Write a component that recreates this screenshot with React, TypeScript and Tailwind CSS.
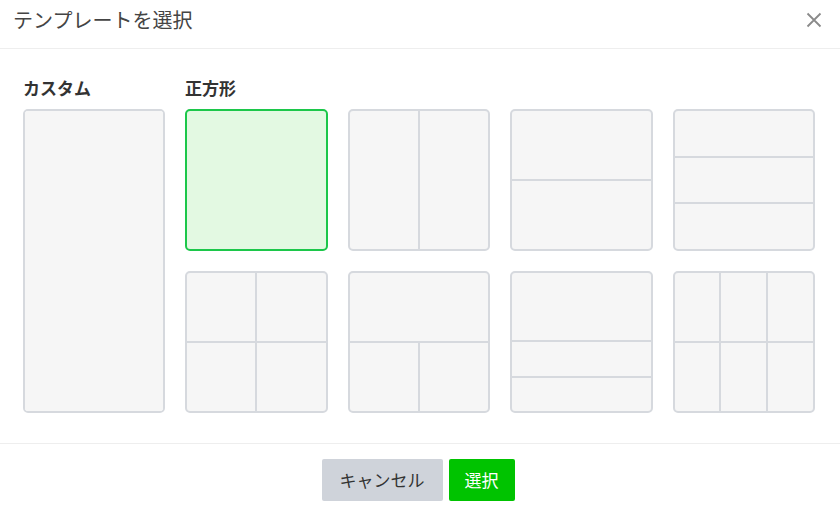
import React from 'react';

const font = { fontFamily: '"Noto Sans CJK JP", "Noto Sans", sans-serif' };

// Cell inside a template preview
const Cell: React.FC<{ className?: string }> = ({ className = '' }) => (
  <div className={`bg-[#f6f6f6] ${className}`} />
);

const Tile: React.FC<{ selected?: boolean; children?: React.ReactNode; className?: string }> = ({
  selected,
  children,
  className = ''
}) => (
  <div
    className={`overflow-hidden rounded-[5px] border-2 ${
      selected ? 'border-[#1cc74a] bg-[#e3f9e2]' : 'border-[#d6d9de] bg-[#d6d9de]'
    } ${className}`}
  >
    {children}
  </div>
);

const App: React.FC = () => {
  return (
    <div className="flex h-[511px] w-[840px] flex-col bg-white text-[#333]" style={font}>
      {/* Header */}
      <div className="flex h-[49px] shrink-0 items-center justify-between border-b border-[#eeeeee] pl-[13px] pr-[18px]">
        <h2 className="pb-[8px] text-[20px] leading-none text-[#444]">テンプレートを選択</h2>
        <button type="button" className="mb-[8px] text-[#8a8a8a]">
          <svg width="16" height="16" viewBox="0 0 16 16" fill="none" stroke="currentColor" strokeWidth="1.8">
            <path d="M1.5 1.5 L14.5 14.5 M14.5 1.5 L1.5 14.5" />
          </svg>
        </button>
      </div>

      {/* Body */}
      <div className="flex flex-1 gap-[20px] border-b border-[#eeeeee] pl-[23px] pt-[29px]">
        <div className="flex w-[142px] flex-col">
          <div className="mb-[11px] h-[20px] text-[17px] font-bold leading-[20px]">カスタム</div>
          <Tile className="h-[304px]">
            <Cell className="h-full" />
          </Tile>
        </div>

        <div className="flex w-[630px] flex-col">
          <div className="mb-[11px] h-[20px] text-[17px] font-bold leading-[20px]">正方形</div>
          <div className="grid grid-cols-4 gap-[20px]">
            <Tile selected className="h-[142px]" />

            <Tile className="h-[142px]">
              <div className="grid h-full grid-cols-2 gap-[2px]">
                <Cell />
                <Cell />
              </div>
            </Tile>

            <Tile className="h-[142px]">
              <div className="grid h-full grid-rows-2 gap-[2px]">
                <Cell />
                <Cell />
              </div>
            </Tile>

            <Tile className="h-[142px]">
              <div className="grid h-full grid-rows-3 gap-[2px]">
                <Cell />
                <Cell />
                <Cell />
              </div>
            </Tile>

            <Tile className="h-[142px]">
              <div className="grid h-full grid-cols-2 grid-rows-2 gap-[2px]">
                <Cell />
                <Cell />
                <Cell />
                <Cell />
              </div>
            </Tile>

            <Tile className="h-[142px]">
              <div className="grid h-full grid-rows-2 gap-[2px]">
                <Cell />
                <div className="grid grid-cols-2 gap-[2px]">
                  <Cell />
                  <Cell />
                </div>
              </div>
            </Tile>

            <Tile className="h-[142px]">
              <div className="grid h-full grid-rows-[2fr_1fr_1fr] gap-[2px]">
                <Cell />
                <Cell />
                <Cell />
              </div>
            </Tile>

            <Tile className="h-[142px]">
              <div className="grid h-full grid-cols-3 grid-rows-2 gap-[2px]">
                <Cell />
                <Cell />
                <Cell />
                <Cell />
                <Cell />
                <Cell />
              </div>
            </Tile>
          </div>
        </div>
      </div>

      {/* Footer */}
      <div className="flex h-[67px] shrink-0 justify-center gap-[6px] pr-[4px] pt-[15px]">
        <button
          type="button"
          className="h-[42px] w-[121px] rounded-[2px] bg-[#cfd3da] text-[17px] text-[#333]"
        >
          キャンセル
        </button>
        <button
          type="button"
          className="h-[42px] w-[66px] rounded-[2px] bg-[#00c300] text-[17px] text-white"
        >
          選択
        </button>
      </div>
    </div>
  );
};

export default App;
